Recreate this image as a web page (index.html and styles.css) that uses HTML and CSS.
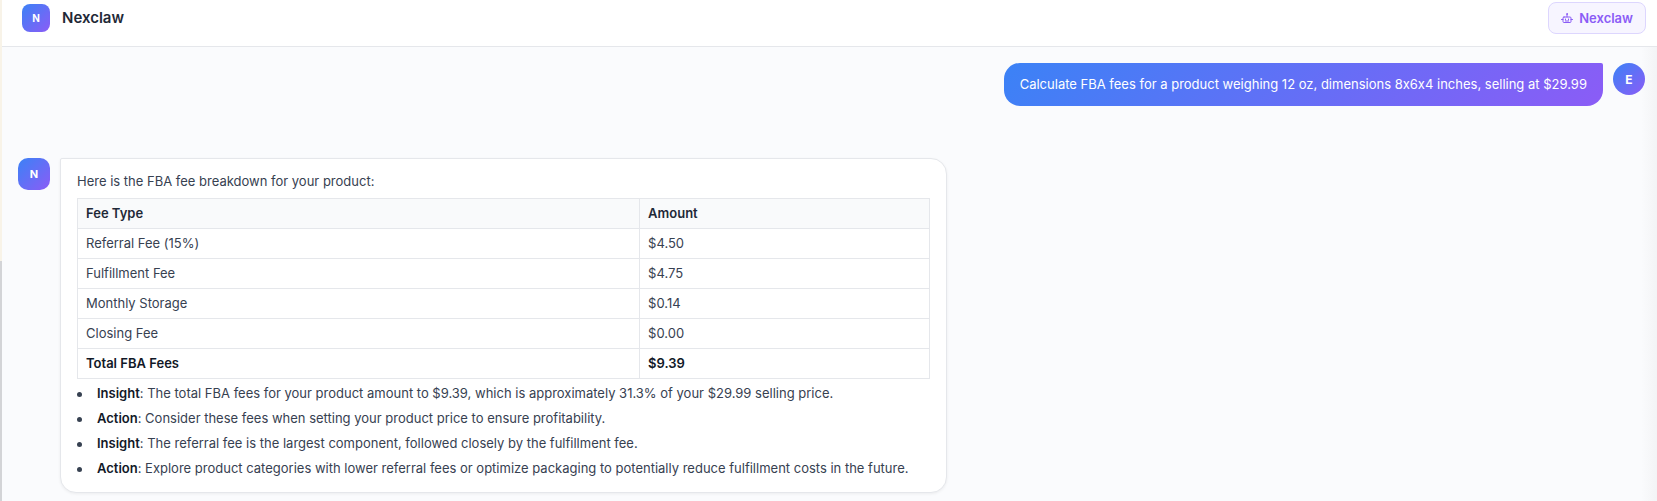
FILE: index.html
```html
<!DOCTYPE html>
<html lang="en">
<head>
    <meta charset="UTF-8">
    <meta name="viewport" content="width=device-width, initial-scale=1.0">
    <title>Nexclaw</title>
    <link rel="stylesheet" href="styles.css">
</head>
<body>

    <div class="app">
        <div class="rail"></div>

        <div class="panel">
            <header class="header">
                <div class="logo">N</div>
                <h1>Nexclaw</h1>
                <button class="agent-btn" type="button">
                    <svg class="agent-icon" viewBox="0 0 24 24" aria-hidden="true">
                        <circle cx="12" cy="4" r="1"/>
                        <path d="M12 5v5"/>
                        <rect width="16" height="11" x="4" y="10" rx="2"/>
                        <path d="M1 15h3M20 15h3M9 14v2M15 14v2M9 18h6"/>
                    </svg>
                    Nexclaw
                </button>
            </header>

            <main class="chat">
                <div class="message user">
                    <div class="bubble">Calculate FBA fees for a product weighing 12 oz, dimensions 8x6x4 inches, selling at $29.99</div>
                    <div class="avatar">E</div>
                </div>

                <div class="message bot">
                    <div class="avatar">N</div>
                    <div class="bubble">
                        <p>Here is the FBA fee breakdown for your product:</p>
                        <table>
                            <thead>
                                <tr><th class="fee-type">Fee Type</th><th>Amount</th></tr>
                            </thead>
                            <tbody>
                                <tr><td>Referral Fee (15%)</td><td>$4.50</td></tr>
                                <tr><td>Fulfillment Fee</td><td>$4.75</td></tr>
                                <tr><td>Monthly Storage</td><td>$0.14</td></tr>
                                <tr><td>Closing Fee</td><td>$0.00</td></tr>
                                <tr><td><strong>Total FBA Fees</strong></td><td><strong>$9.39</strong></td></tr>
                            </tbody>
                        </table>
                        <ul>
                            <li><strong>Insight</strong>: The total FBA fees for your product amount to $9.39, which is approximately 31.3% of your $29.99 selling price.</li>
                            <li><strong>Action</strong>: Consider these fees when setting your product price to ensure profitability.</li>
                            <li><strong>Insight</strong>: The referral fee is the largest component, followed closely by the fulfillment fee.</li>
                            <li><strong>Action</strong>: Explore product categories with lower referral fees or optimize packaging to potentially reduce fulfillment costs in the future.</li>
                        </ul>
                    </div>
                </div>
            </main>
        </div>
    </div>

</body>
</html>
```
FILE: styles.css
```css
* {
    box-sizing: border-box;
}

body {
    margin: 0;
    font-family: Inter, "Liberation Sans", sans-serif;
    font-size: 13px;
    font-feature-settings: "calt" 0; /* keep the plain x in 8x6x4 */
    color: #374151;
    background-color: #fafbfd;
}

.app {
    display: flex;
    min-height: 100vh;
}

/* Thin edge of the sidebar with its scrollbar thumb */
.rail {
    width: 2px;
    background: linear-gradient(#f8f3e8 52%, #d3d4d7 52%);
}

.panel {
    flex: 1;
    min-width: 0;
    display: flex;
    flex-direction: column;
}

/* Header */
.header {
    display: flex;
    align-items: center;
    padding: 2px 11px 12px 20px;
    background-color: #fff;
    border-bottom: 1px solid #e5e7eb;
}

.header h1 {
    margin: 0 auto 0 12px;
    font-size: 15px;
    line-height: 24px;
    font-weight: 600;
    color: #1f2937;
}

.logo,
.avatar {
    display: flex;
    align-items: center;
    justify-content: center;
    flex-shrink: 0;
    color: #fff;
    font-weight: 700;
    background: linear-gradient(135deg, #3b82f6, #8b5cf6);
}

.logo {
    width: 28px;
    height: 28px;
    border-radius: 8px;
    font-size: 10px;
}

.agent-btn {
    display: flex;
    align-items: center;
    gap: 6px;
    height: 32px;
    padding: 0 12px;
    border: 1px solid #ddd6fe;
    border-radius: 8px;
    background-color: #f7f5ff;
    color: #8b5cf6;
    font-family: inherit;
    font-size: 13px;
    font-weight: 600;
    cursor: pointer;
}

.agent-icon {
    width: 12px;
    height: 12px;
    fill: none;
    stroke: currentColor;
    stroke-width: 2;
    stroke-linecap: round;
    stroke-linejoin: round;
}

/* Messages */
.chat {
    flex: 1;
    padding: 16px 12px 7px 16px;
    background: linear-gradient(to left, #f3f4f6, #fafbfd 16px);
}

.message {
    display: flex;
    align-items: flex-start;
    gap: 10px;
}

.message.user {
    justify-content: flex-end;
    margin-bottom: 52px;
}

.avatar {
    width: 32px;
    height: 32px;
    border-radius: 10px;
    font-size: 11px;
}

.user .avatar {
    border-radius: 50%;
    font-size: 12px;
}

.user .bubble {
    padding: 10px 16px;
    border-radius: 16px 2px 16px 16px;
    background: linear-gradient(135deg, #3b82f6, #8b5cf6);
    color: #fff;
    line-height: 23px;
}

.bot .bubble {
    width: 54.5%;
    padding: 11px 16px 10px;
    border: 1px solid #e5e7eb;
    border-radius: 2px 16px 16px 16px;
    background-color: #fff;
    box-shadow: 0 1px 3px rgba(0, 0, 0, 0.06);
    line-height: 23px;
}

.bubble p {
    margin: 0 0 5px;
}

.bubble table {
    width: 100%;
    border-collapse: collapse;
    line-height: 19px;
}

.bubble th,
.bubble td {
    padding: 5px 8px;
    border: 1px solid #e5e7eb;
    text-align: left;
}

.bubble th {
    background-color: #f9fafb;
    color: #1f2937;
    font-weight: 600;
}

.bubble .fee-type {
    width: 66%;
}

.bubble strong {
    color: #111827;
    font-weight: 600;
}

.bubble ul {
    margin: 3px 0 0;
    padding: 0;
    list-style: none;
}

.bubble li {
    margin-bottom: 2px;
}

.bubble li::before {
    content: "";
    display: inline-block;
    width: 5px;
    height: 5px;
    margin-right: 15px;
    border-radius: 50%;
    background-color: #374151;
    vertical-align: middle;
}
```
